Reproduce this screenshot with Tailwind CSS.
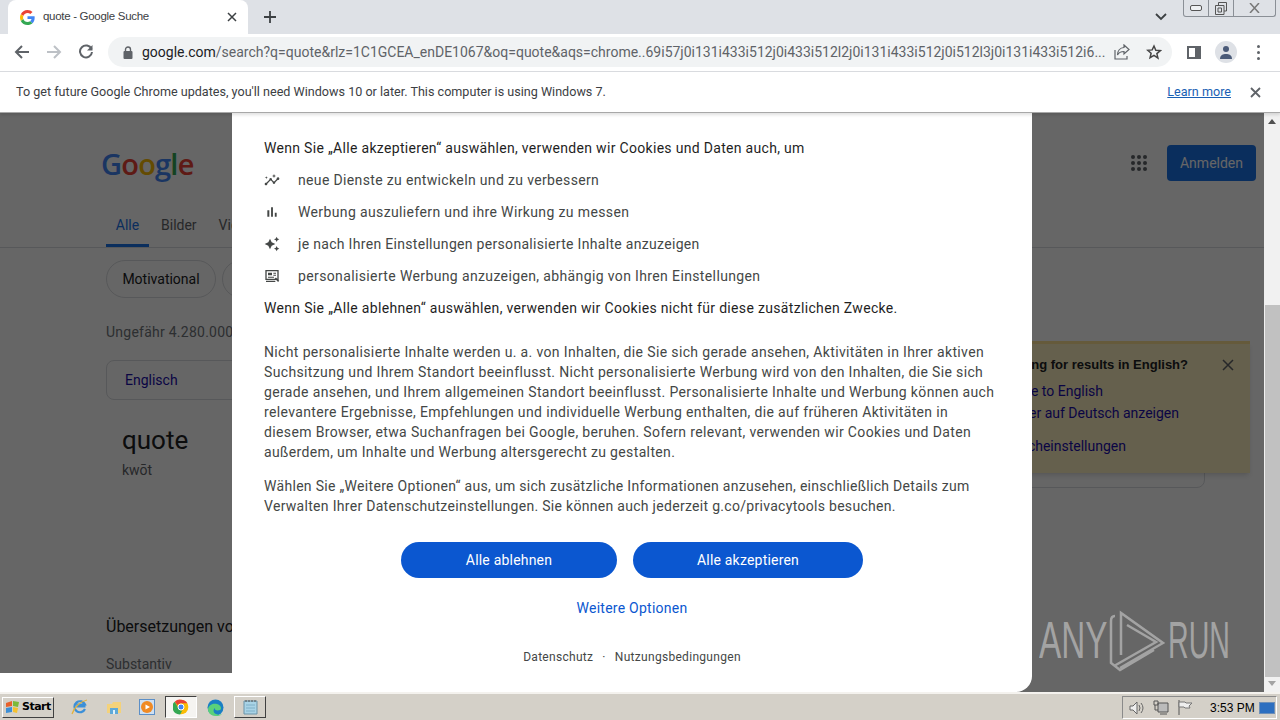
<!DOCTYPE html>
<html lang="de">
<head>
  <meta charset="UTF-8">
  <title>quote - Google Suche</title>
  <script src="https://cdn.jsdelivr.net/npm/@tailwindcss/browser@4"></script>
</head>
<body class="w-[1280px] h-[720px] overflow-hidden flex flex-col bg-white font-['Roboto',sans-serif]">

  <!-- tab strip -->
  <div class="h-[34px] bg-[#dee1e6] flex items-end relative shrink-0">
    <div class="w-[240px] h-[34px] ml-[8px] bg-white rounded-t-lg flex items-center pl-[12px] pr-[11px]">
      <svg class="w-[15px] h-[15px] shrink-0" viewBox="0 0 48 48"><path fill="#EA4335" d="M24 9.500c3.500 0 6.700 1.200 9.200 3.600l6.900-6.900C35.900 2.400 30.500 0 24 0 14.600 0 6.500 5.400 2.600 13.200l8 6.200C12.500 13.700 17.800 9.500 24 9.500z"/><path fill="#4285F4" d="M46.900 24.500c0-1.600-.1-3.100-.4-4.500H24v9h12.900c-.6 3-2.200 5.500-4.700 7.200l7.700 6c4.500-4.200 7-10.300 7-17.700z"/><path fill="#FBBC05" d="M10.600 28.600c-.5-1.400-.8-3-.8-4.600s.3-3.200.8-4.600l-8-6.200C.900 16.500 0 20.100 0 24s.9 7.500 2.600 10.800l8-6.200z"/><path fill="#34A853" d="M24 48c6.500 0 11.900-2.100 15.900-5.800l-7.700-6c-2.200 1.400-4.900 2.300-8.200 2.300-6.200 0-11.500-4.200-13.400-9.900l-8 6.200C6.500 42.600 14.600 48 24 48z"/></svg>
      <span class="ml-[8px] text-[11.500px] tracking-[-0.3px] text-[#3c4043] font-['Liberation_Sans',sans-serif] whitespace-nowrap">quote - Google Suche</span>
      <svg class="w-[10px] h-[10px] ml-auto" viewBox="0 0 10 10"><path d="M1 1l8 8M9 1l-8 8" stroke="#3c4043" stroke-width="1.500"/></svg>
    </div>
    <svg class="w-[12px] h-[12px] ml-[16px] mb-[11px]" viewBox="0 0 12 12"><path d="M6 0v12M0 6h12" stroke="#3c4043" stroke-width="1.800"/></svg>
    <svg class="absolute left-[1155px] top-[13px] w-[12px] h-[8px]" viewBox="0 0 12 8"><path d="M1 1l5 5 5-5" fill="none" stroke="#3c4043" stroke-width="1.800"/></svg>
    <div class="absolute left-[1183px] top-0 w-[93px] h-[17px] border border-t-0 border-[#8a8f96] rounded-b-[3px] flex">
      <div class="w-[25px] border-r border-[#8a8f96] flex items-center justify-center"><div class="w-[12px] h-[6px] border border-[#555] rounded-[2px] bg-[#eef0f2]"></div></div>
      <div class="w-[25px] border-r border-[#8a8f96] flex items-center justify-center">
        <svg class="w-[12px] h-[13px]" viewBox="0 0 12 13"><path d="M3.500 3V.5h8V9H9M.5 3.500h8.500v9H.5z" fill="none" stroke="#555"/><path d="M3 6h3.500v4H3z" fill="none" stroke="#555"/></svg>
      </div>
      <div class="flex-1 flex items-center justify-center">
        <svg class="w-[11px] h-[10px]" viewBox="0 0 11 10"><path d="M1 0l9 10M10 0L1 10" stroke="#777" stroke-width="1.500"/></svg>
      </div>
    </div>
  </div>

  <!-- toolbar -->
  <div class="h-[38px] pb-[1px] bg-white border-b border-[#dadce0] flex items-center shrink-0">
    <svg class="w-[16px] h-[16px] ml-[14px]" viewBox="0 0 16 16"><path d="M15 8H2M8 2L2 8l6 6" fill="none" stroke="#5f6368" stroke-width="2"/></svg>
    <svg class="w-[16px] h-[16px] ml-[16px]" viewBox="0 0 16 16"><path d="M1 8h13M8 2l6 6-6 6" fill="none" stroke="#bdc1c6" stroke-width="2"/></svg>
    <svg class="w-[16px] h-[16px] ml-[16px]" viewBox="0 0 16 16"><path d="M13.500 5A6 6 0 1 0 14 8" fill="none" stroke="#5f6368" stroke-width="2"/><path d="M14.500 1v5.500H9z" fill="#5f6368"/></svg>
    <div class="w-[1064px] h-[30px] ml-[14px] bg-[#f1f3f4] rounded-full flex items-center pl-[15px] relative">
      <svg class="w-[10px] h-[13px] shrink-0" viewBox="0 0 10 13"><path d="M2.500 6V3.500a2.500 2.500 0 0 1 5 0V6" fill="none" stroke="#5f6368" stroke-width="1.400"/><rect x="0.500" y="5" width="9" height="8" rx="1" fill="#5f6368"/></svg>
      <span class="ml-[9px] text-[14px] whitespace-nowrap text-[#5f6368]"><span class="text-[#202124]">google.com</span>/search?q=quote&amp;rlz=1C1GCEA_enDE1067&amp;oq=quote&amp;aqs=chrome..69i57j0i131i433i512j0i433i512l2j0i131i433i512j0i512l3j0i131i433i512i6...</span>
      <svg class="absolute left-[1006px] top-[7px] w-[16px] h-[16px]" viewBox="0 0 16 16"><path d="M10 1l5 4.500L10 10V7.500C6.500 7.500 4.500 9 3.500 11 3.500 7 6 3.800 10 3.500zM1 6v9h12v-3" fill="none" stroke="#5f6368" stroke-width="1.200"/></svg>
      <svg class="absolute left-[1038px] top-[7px] w-[16px] h-[16px]" viewBox="0 0 24 24"><path d="M12 3l2.700 6.300 6.800.6-5.200 4.500 1.600 6.700L12 17l-5.900 3.600 1.600-6.700-5.200-4.500 6.800-.6z" fill="none" stroke="#444" stroke-width="2.200"/></svg>
    </div>
    <div class="w-[14px] h-[13px] ml-[15px] border-2 border-[#5f6368] border-r-[6px]"></div>
    <div class="w-[22px] h-[22px] ml-[14px] rounded-full bg-[#dee1e6] flex items-center justify-center">
      <svg class="w-[14px] h-[14px]" viewBox="0 0 14 14"><circle cx="7" cy="4" r="3" fill="#4a5a78"/><path d="M1 14c0-4 3-5 6-5s6 1 6 5z" fill="#4a5a78"/></svg>
    </div>
    <div class="ml-[20px] flex flex-col gap-[3px]">
      <div class="w-[3px] h-[3px] rounded-full bg-[#5f6368]"></div>
      <div class="w-[3px] h-[3px] rounded-full bg-[#5f6368]"></div>
      <div class="w-[3px] h-[3px] rounded-full bg-[#5f6368]"></div>
    </div>
  </div>

  <!-- update infobar -->
  <div class="h-[41px] bg-white flex items-center pl-[16px] pr-[19px] shrink-0 relative z-30 border-b border-[#a8a8a8] shadow-[0_2px_3px_rgba(0,0,0,0.12)]">
    <span class="text-[12.600px] text-[#3c4043] whitespace-nowrap">To get future Google Chrome updates, you'll need Windows 10 or later. This computer is using Windows 7.</span>
    <a class="ml-auto text-[12.600px] text-[#1a5fb4] underline">Learn more</a>
    <svg class="w-[11px] h-[11px] ml-[19px]" viewBox="0 0 11 11"><path d="M1 1l9 9M10 1l-9 9" stroke="#5f6368" stroke-width="1.800"/></svg>
  </div>

  <!-- viewport -->
  <div class="h-[579px] flex relative shrink-0">
    <div class="w-[1264px] relative overflow-hidden bg-white">

      <!-- page behind the consent dialog -->
      <div class="flex items-center pl-[101px] pr-[8px] h-[100px]">
        <div class="text-[29px] tracking-[-0.8px] font-semibold font-['Open_Sans',sans-serif] leading-none"><span class="text-[#4285f4]">G</span><span class="text-[#ea4335]">o</span><span class="text-[#fbbc05]">o</span><span class="text-[#4285f4]">g</span><span class="text-[#34a853]">l</span><span class="text-[#ea4335]">e</span></div>
        <div class="ml-auto grid grid-cols-3 gap-[2px]">
          <i class="w-[4px] h-[4px] rounded-full bg-[#5f6368]"></i><i class="w-[4px] h-[4px] rounded-full bg-[#5f6368]"></i><i class="w-[4px] h-[4px] rounded-full bg-[#5f6368]"></i>
          <i class="w-[4px] h-[4px] rounded-full bg-[#5f6368]"></i><i class="w-[4px] h-[4px] rounded-full bg-[#5f6368]"></i><i class="w-[4px] h-[4px] rounded-full bg-[#5f6368]"></i>
          <i class="w-[4px] h-[4px] rounded-full bg-[#5f6368]"></i><i class="w-[4px] h-[4px] rounded-full bg-[#5f6368]"></i><i class="w-[4px] h-[4px] rounded-full bg-[#5f6368]"></i>
        </div>
        <div class="ml-[20px] w-[89px] h-[36px] rounded bg-[#1a73e8] text-white text-sm flex items-center justify-center">Anmelden</div>
      </div>
      <div class="h-[34px] border-b border-[#dadce0] pl-[106px] flex text-sm text-[#5f6368] box-content">
        <div class="h-[34px] w-[43px] border-b-[3px] border-[#1a73e8] text-[#1a73e8] text-center pt-[2px]">Alle</div>
        <div class="ml-[12px] pt-[2px]">Bilder</div>
        <div class="ml-[22px] pt-[2px]">Videos</div>
      </div>
      <div class="pl-[106px] pt-[12px] flex gap-[6px]">
        <div class="h-[38px] w-[110px] rounded-full border border-[#dadce0] text-sm text-[#202124] flex items-center justify-center">Motivational</div>
        <div class="h-[38px] w-[110px] rounded-full border border-[#dadce0]"></div>
      </div>
      <div class="pl-[106px] pt-[24px] text-sm tracking-[0.25px] leading-[20px] text-[#70757a]">Ungefähr 4.280.000 Ergebnisse</div>
      <div class="ml-[106px] mt-[18px] w-[400px] h-[40px] rounded-lg border border-[#dadce0] text-sm text-[#1a0dab] flex items-center pl-[18px]">Englisch</div>
      <div class="pl-[122px] pt-[24px] text-[26px] leading-[32px] text-[#202124]">quote</div>
      <div class="pl-[122px] pt-[4px] text-sm leading-[20px] text-[#5f6368]">kwōt</div>
      <div class="pl-[106px] pt-[135px] text-base leading-[24px] text-[#202124]">Übersetzungen von quote</div>
      <div class="pl-[106px] pt-[15px] text-sm leading-[20px] text-[#70757a]">Substantiv</div>

      <!-- card and language prompt on the right of the results -->
      <div class="absolute left-[900px] top-[300px] w-[305px] h-[75px] rounded-b-lg border border-[#dadce0]"></div>
      <div class="absolute left-[850px] top-[228px] w-[400px] h-[132px] bg-[#fdf0c0] border-t-[3px] border-[#fde293] shadow-md flex flex-col items-end">
        <div class="mr-[62px] mt-[12px] text-[13px] leading-[18px] font-bold text-[#202124] font-['Liberation_Sans',sans-serif]">Are you looking for results in English?</div>
        <svg class="absolute left-[372px] top-[15px] w-[12px] h-[12px]" viewBox="0 0 12 12"><path d="M1 1l10 10M11 1L1 11" stroke="#5f6368" stroke-width="1.500"/></svg>
        <div class="mr-[147px] mt-[7px] text-sm leading-[20px] text-[#1a0dab]">Change to English</div>
        <div class="mr-[71px] mt-[2px] text-sm leading-[20px] text-[#1a0dab]">Ergebnisse immer auf Deutsch anzeigen</div>
        <div class="mr-[124px] mt-[13px] text-sm leading-[20px] text-[#1a0dab]">Sucheinstellungen</div>
      </div>

      <!-- dim layer -->
      <div class="absolute inset-0 bg-black/60"></div>
      <div class="absolute left-0 bottom-0 w-[252px] h-[19px] bg-white"></div>

      <!-- watermark -->
      <div class="absolute left-[1039px] top-[492px] flex items-center text-[#a3a3a3] font-['Liberation_Sans',sans-serif] leading-none text-[52px]">
        <span class="w-[61px] scale-x-[0.64] origin-left">ANY</span>
        <svg class="w-[75px] h-[70px] -mr-[7px]" viewBox="0 0 75 70"><path d="M21 50V8l42 30-43 25" fill="none" stroke="#a3a3a3" stroke-width="2.500"/><path d="M27 20l29 17-42 24" fill="none" stroke="#a3a3a3" stroke-width="2.500"/><path d="M15 11c-3 0-4 2-4 5v42l9 7 34-20" fill="none" stroke="#a3a3a3" stroke-width="2.500"/></svg>
        <span class="scale-x-[0.55] origin-left">RUN</span>
      </div>

      <!-- consent dialog -->
      <div class="absolute left-[232px] top-0 bottom-0 w-[800px] bg-white rounded-b-[16px] pt-[25px] px-[32px] text-sm leading-[20px] tracking-[0.37px] text-[#1f1f1f] whitespace-nowrap">
        <p class="tracking-[0.31px]">Wenn Sie „Alle akzeptieren“ auswählen, verwenden wir Cookies und Daten auch, um</p>
        <ul class="mt-[12px] flex flex-col gap-[12px] text-[#444746]">
          <li class="flex items-center">
            <svg class="w-[16px] h-[16px] shrink-0" viewBox="0 0 24 24" fill="#444746"><path d="M21 8c-1.450 0-2.260 1.440-1.930 2.510l-3.550 3.560c-.3-.09-.74-.09-1.040 0l-2.550-2.550C12.270 10.450 11.460 9 10 9c-1.450 0-2.270 1.440-1.930 2.520l-4.560 4.550C2.440 15.740 1 16.550 1 18c0 1.100.9 2 2 2 1.450 0 2.260-1.440 1.930-2.510l4.550-4.560c.3.09.74.09 1.040 0l2.550 2.550C12.730 16.550 13.540 18 15 18c1.450 0 2.270-1.440 1.930-2.520l3.560-3.550c1.070.33 2.510-.48 2.510-1.930 0-1.100-.9-2-2-2z"/><path d="M15 9l.94-2.070L18 6l-2.060-.93L15 3l-.92 2.070L12 6l2.080.93zM3.500 11L4 9l2-.5L4 8l-.5-2L3 8l-2 .5L3 9z"/></svg>
            <span class="ml-[18px] tracking-[0.35px]">neue Dienste zu entwickeln und zu verbessern</span>
          </li>
          <li class="flex items-center">
            <svg class="w-[16px] h-[16px] shrink-0" viewBox="0 0 24 24" fill="#444746"><path d="M5 9.200h3V19H5zM10.600 5h2.800v14h-2.800zM16.200 13H19v6h-2.800z"/></svg>
            <span class="ml-[18px]">Werbung auszuliefern und ihre Wirkung zu messen</span>
          </li>
          <li class="flex items-center">
            <svg class="w-[16px] h-[16px] shrink-0" viewBox="0 0 24 24" fill="#444746"><path d="M19 9l1.250-2.750L23 5l-2.750-1.250L19 1l-1.250 2.750L15 5l2.750 1.250zM11.500 9.500L9 4 6.500 9.500 1 12l5.500 2.500L9 20l2.500-5.500L17 12l-5.500-2.500zM19 15l-1.250 2.750L15 19l2.750 1.250L19 23l1.250-2.750L23 19l-2.750-1.250z"/></svg>
            <span class="ml-[18px] tracking-[0.31px]">je nach Ihren Einstellungen personalisierte Inhalte anzuzeigen</span>
          </li>
          <li class="flex items-center">
            <svg class="w-[16px] h-[16px] shrink-0" viewBox="0 0 24 24"><path d="M3 4h18v13H3zM3 20h14" fill="none" stroke="#444746" stroke-width="2"/><path d="M6 7h6v4H6zM6 13h9v1.500H6zM14 7h4v1.500h-4zM14 10h4v1.500h-4z" fill="#444746"/><path d="M17 15l5 5" stroke="#444746" stroke-width="2.500"/></svg>
            <span class="ml-[18px]">personalisierte Werbung anzuzeigen, abhängig von Ihren Einstellungen</span>
          </li>
        </ul>
        <p class="mt-[12px] tracking-[0.33px]">Wenn Sie „Alle ablehnen“ auswählen, verwenden wir Cookies nicht für diese zusätzlichen Zwecke.</p>
        <p class="mt-[24px] text-[#444746] tracking-[0.36px]">Nicht personalisierte Inhalte werden u. a. von Inhalten, die Sie sich gerade ansehen, Aktivitäten in Ihrer aktiven<br>Suchsitzung und Ihrem Standort beeinflusst. Nicht personalisierte Werbung wird von den Inhalten, die Sie sich<br>gerade ansehen, und Ihrem allgemeinen Standort beeinflusst. Personalisierte Inhalte und Werbung können auch<br>relevantere Ergebnisse, Empfehlungen und individuelle Werbung enthalten, die auf früheren Aktivitäten in<br>diesem Browser, etwa Suchanfragen bei Google, beruhen. Sofern relevant, verwenden wir Cookies und Daten<br>außerdem, um Inhalte und Werbung altersgerecht zu gestalten.</p>
        <p class="mt-[14px] text-[#444746] tracking-[0.3px]">Wählen Sie „Weitere Optionen“ aus, um sich zusätzliche Informationen anzusehen, einschließlich Details zum<br>Verwalten Ihrer Datenschutzeinstellungen. Sie können auch jederzeit g.co/privacytools besuchen.</p>
        <div class="mt-[26px] flex justify-center gap-[16px] tracking-[0.2px]">
          <button class="w-[216px] h-[36px] rounded-full bg-[#0b57d0] text-white">Alle ablehnen</button>
          <button class="w-[230px] h-[36px] rounded-full bg-[#0b57d0] text-white">Alle akzeptieren</button>
        </div>
        <div class="mt-[20px] text-center text-[#0b57d0] tracking-[0.25px]">Weitere Optionen</div>
        <div class="mt-[30px] flex justify-center text-xs leading-[18px] tracking-[0.3px] text-[#444746]">
          <span>Datenschutz</span><span class="mx-[9px]">·</span><span>Nutzungsbedingungen</span>
        </div>
      </div>
    </div>

    <!-- scrollbar -->
    <div class="w-[16px] bg-[#f1f1f1] relative">
      <div class="absolute left-[4px] top-[6px] w-0 h-0 border-x-[4px] border-x-transparent border-b-[5px] border-b-[#505050]"></div>
      <div class="absolute left-[1px] right-0 top-[192px] h-[372px] bg-[#c1c1c1]"></div>
      <div class="absolute left-[4px] bottom-[6px] w-0 h-0 border-x-[4px] border-x-transparent border-t-[5px] border-t-[#a3a3a3]"></div>
    </div>
  </div>

  <!-- windows taskbar -->
  <div class="h-[28px] bg-[#d4d0c8] border-t-2 border-[#f4f2ee] flex items-center shrink-0 relative font-['Liberation_Sans',sans-serif]">
    <div class="ml-[2px] w-[52px] h-[21px] bg-[#d4d0c8] border border-t-white border-l-white border-r-[#404040] border-b-[#404040] flex items-center pl-[2px]">
      <svg class="w-[15px] h-[14px] shrink-0" viewBox="0 0 15 14"><path d="M1 3l6-2v5l-6 1z" fill="#e8612c"/><path d="M8 1l6 1-1 5-5-1z" fill="#7cb93a"/><path d="M1 8l6-1v5l-6 1z" fill="#3d8fd6"/><path d="M8 7l5 1-1 5-4-1z" fill="#f5c12e"/></svg>
      <span class="ml-[2px] text-[11px] font-bold text-black font-['DejaVu_Sans',sans-serif] tracking-[-0.5px]">Start</span>
    </div>
    <svg class="w-[18px] h-[18px] ml-[17px]" viewBox="0 0 18 18"><path d="M14 11a5.500 5.500 0 1 1 0-4.500H6.500v2h8" fill="none" stroke="#3b8fd8" stroke-width="2.200"/><path d="M1 16C3 9 10 3 16 2" fill="none" stroke="#e3b23c" stroke-width="1.200"/></svg>
    <svg class="w-[16px] h-[16px] ml-[17px]" viewBox="0 0 16 16"><path d="M1 5h5l1-2h8v11H1z" fill="#f4d27a"/><path d="M4 9h8v6H4z" fill="#5ea9d8"/><path d="M7 11h2v4H7z" fill="#dff0fa"/></svg>
    <div class="w-[16px] h-[16px] ml-[17px] bg-[#cfe0f2] border border-[#5c8fc7] flex items-center justify-center">
      <svg class="w-[12px] h-[12px]" viewBox="0 0 12 12"><circle cx="6" cy="6" r="6" fill="#f08a24"/><path d="M4.500 3.500L9 6l-4.500 2.500z" fill="#fff"/></svg>
    </div>
    <div class="ml-[10px] w-[32px] h-[22px] bg-[#f5f4f1] border border-t-[#404040] border-l-[#404040] border-r-white border-b-white flex items-center justify-center">
      <svg class="w-[16px] h-[16px]" viewBox="0 0 48 48"><circle cx="24" cy="24" r="22" fill="#fbbc05"/><path d="M24 2a22 22 0 0 1 19 11H24a11 11 0 0 0-10 6L5 8A22 22 0 0 1 24 2z" fill="#ea4335"/><path d="M5 8l10 17a11 11 0 0 0 13 9l-6 12A22 22 0 0 1 5 8z" fill="#34a853"/><circle cx="24" cy="24" r="9" fill="#4285f4" stroke="#fff" stroke-width="3"/></svg>
    </div>
    <svg class="w-[17px] h-[17px] ml-[10px]" viewBox="0 0 17 17"><circle cx="8.500" cy="8.500" r="8" fill="#1a7fc4"/><path d="M1 10c1-5 6-6 9-5 4 1 5 5 3 6-3 1-6 0-5-2-2 1-2 5 1 6 2 1 4 1 6 0-2 2-4 2-6 2-5 0-8-3-8-7z" fill="#5ad17a"/></svg>
    <div class="ml-[10px] w-[32px] h-[22px] bg-[#d4d0c8] border border-t-white border-l-white border-r-[#404040] border-b-[#404040] flex items-center justify-center">
      <svg class="w-[15px] h-[16px]" viewBox="0 0 15 16"><path d="M1 2h13v13H1z" fill="#a9d3e6" stroke="#6b93a8"/><path d="M3 1v2M6 1v2M9 1v2M12 1v2" stroke="#555"/><path d="M3 6h9M3 9h9M3 12h9" stroke="#7fb0c8"/></svg>
    </div>
    <div class="absolute left-[1122px] top-[2px] w-[155px] h-[23px] border border-t-[#8a8a8a] border-l-[#8a8a8a] border-r-white border-b-white flex items-center">
      <svg class="w-[16px] h-[14px] ml-[6px]" viewBox="0 0 16 14"><path d="M1 5h3l4-4v12L4 9H1z" fill="#eee" stroke="#666"/><path d="M10 4q2 3 0 6M12 2q4 5 0 10" fill="none" stroke="#666"/></svg>
      <svg class="w-[16px] h-[15px] ml-[8px]" viewBox="0 0 16 15"><path d="M5 3h10v9H5z" fill="#bbb" stroke="#555"/><path d="M1 1h4v4H1zM2 5v5h3M7 14h7" fill="none" stroke="#555"/></svg>
      <svg class="w-[16px] h-[15px] ml-[8px]" viewBox="0 0 16 15"><path d="M2 0v15" stroke="#555"/><path d="M2 2h6l1 1h6l-3 3 1 2H8L7 7H2z" fill="#eee" stroke="#777"/></svg>
      <span class="ml-[17px] text-[12px] text-black whitespace-nowrap">3:53 PM</span>
      <div class="ml-auto mr-[1px] w-[16px] h-[12px] bg-[#2d6fc0] border border-[#6d8fb8]"></div>
    </div>
  </div>
</body>
</html>
